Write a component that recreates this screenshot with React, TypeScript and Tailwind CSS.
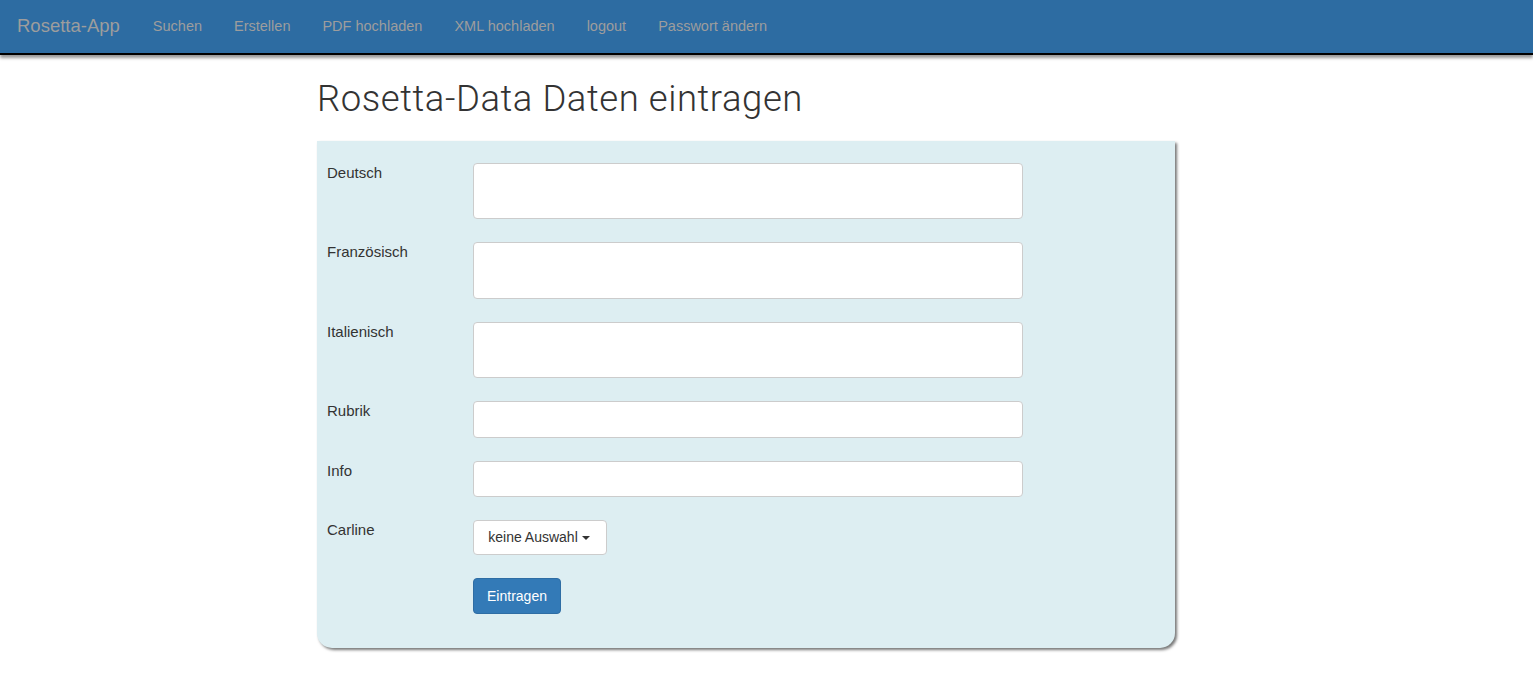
const links = ["Suchen", "Erstellen", "PDF hochladen", "XML hochladen", "logout", "Passwort ändern"];

function Row({ label, children }: { label: string; children: React.ReactNode }) {
  return (
    <div className="flex">
      <label className="w-[156px] shrink-0 pl-[10px] text-[15px] leading-[20px] text-[#333]">{label}</label>
      {children}
    </div>
  );
}

export default function App() {
  return (
    <div className="min-h-[695px] bg-white font-['Liberation_Sans',Arial,sans-serif]">
      <nav className="flex h-[55px] items-center bg-[#2d6ca2] border-b-2 border-black shadow-[0_3px_3px_#999]">
        <span className="ml-[17px] mr-[33px] text-[18.5px] text-[#9d9d9d] pb-[1px]">Rosetta-App</span>
        <div className="flex gap-[32px] text-[14.5px] text-[#9d9d9d]">
          {links.map((l) => (
            <span key={l}>{l}</span>
          ))}
        </div>
      </nav>
      <div className="ml-[317px] w-[858px]">
        <h1 className="mt-[22px] mb-[20px] text-[36.5px] leading-[44px] tracking-[0.55px] text-[#333] font-['Roboto',sans-serif] font-light">
          Rosetta-Data Daten eintragen
        </h1>
        <div className="flex flex-col gap-[23px] bg-[#ddeef2] pt-[22px] pb-[34px] rounded-b-[15px] shadow-[2px_2px_3px_#777]">
          <Row label="Deutsch">
            <textarea className="h-[56px] w-[550px] rounded-[4px] border border-[#ccc] bg-white resize-none" />
          </Row>
          <Row label="Französisch">
            <textarea className="h-[57px] w-[550px] rounded-[4px] border border-[#ccc] bg-white resize-none" />
          </Row>
          <Row label="Italienisch">
            <textarea className="h-[56px] w-[550px] rounded-[4px] border border-[#ccc] bg-white resize-none" />
          </Row>
          <Row label="Rubrik">
            <input className="h-[37px] w-[550px] rounded-[4px] border border-[#ccc] bg-white" />
          </Row>
          <Row label="Info">
            <input className="h-[36px] w-[550px] rounded-[4px] border border-[#ccc] bg-white" />
          </Row>
          <Row label="Carline">
            <button className="flex h-[35px] w-[134px] items-center justify-center gap-[4px] rounded-[4px] border border-[#ccc] bg-white pr-[2px] text-[14px] text-[#333]">
              keine Auswahl
              <span className="border-x-[4px] border-t-[4px] border-x-transparent border-t-[#333]" />
            </button>
          </Row>
          <div className="pl-[156px]">
            <button className="block h-[36px] w-[88px] rounded-[4px] border border-[#2e6da4] bg-[#337ab7] text-[14px] text-white">
              Eintragen
            </button>
          </div>
        </div>
      </div>
    </div>
  );
}
